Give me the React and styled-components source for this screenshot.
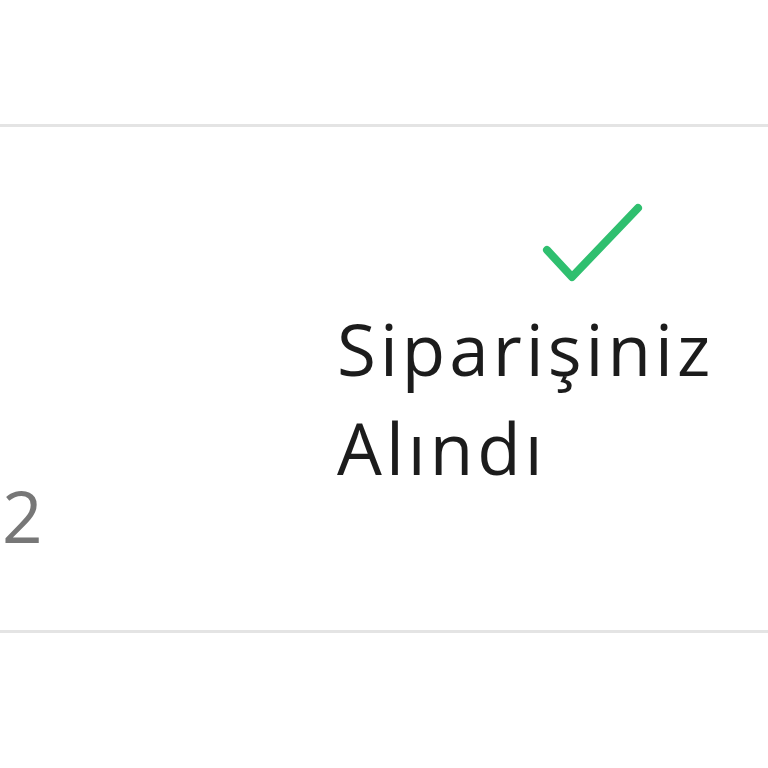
import React from 'react'
import styled, { createGlobalStyle } from "styled-components";

const Global = createGlobalStyle`
  html, body {
    margin: 0;
    padding: 0;
    background: #ffffff;
    overflow: hidden;
  }
`;

const Page = styled.div`
  width: 768px;
  height: 768px;
  padding-top: 124px;
  box-sizing: border-box;
  font-family: "Open Sans", "Liberation Sans", sans-serif;
`;

const OrderRow = styled.div`
  display: grid;
  grid-template-columns: 337px 1fr;
  height: 509px;
  box-sizing: border-box;
  border-top: 3px solid #e4e4e4;
  border-bottom: 3px solid #e4e4e4;
`;

const QtyCell = styled.div`
  padding-top: 339px;
  padding-left: 2px;
  font-size: 71px;
  line-height: 99px;
  color: #777777;
`;

const StatusCell = styled.div`
  display: flex;
  flex-direction: column;
  padding-top: 71px;
`;

const Check = styled.svg`
  width: 110px;
  height: 90px;
  margin-left: 200px;
  display: block;
`;

const StatusText = styled.div`
  margin-top: 11px;
  font-size: 71px;
  line-height: 99px;
  letter-spacing: 4px;
  color: #1c1c1c;
`;

function App() {
    return (
        <>
          <Global />
          <Page>
            <OrderRow>
              <QtyCell>2</QtyCell>
              <StatusCell>
                <Check viewBox="0 0 110 90">
                  <path d="M10 52 L35 79 L101 10" fill="none" stroke="#2fbf6f" strokeWidth="8" strokeLinecap="round" strokeLinejoin="round" />
                </Check>
                <StatusText>Siparişiniz<br />Alındı</StatusText>
              </StatusCell>
            </OrderRow>
          </Page>
        </>
    )
}

export default App;
